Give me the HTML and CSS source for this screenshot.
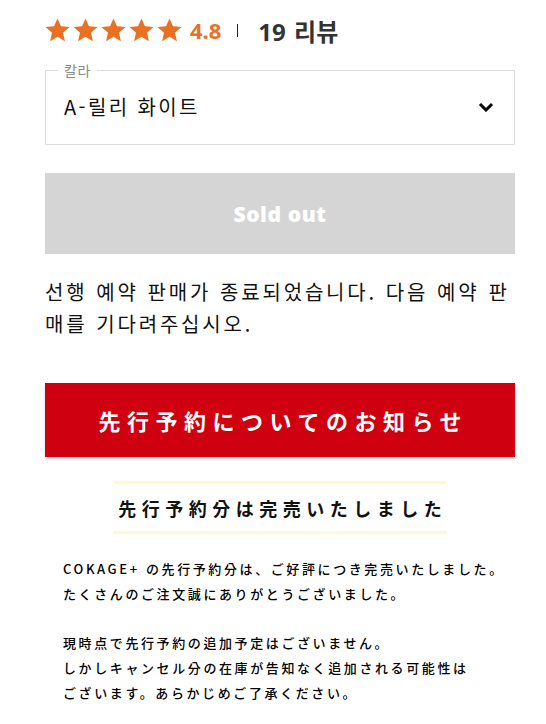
FILE: index.html
```html
<!DOCTYPE html>
<html lang="ko">
<head>
<meta charset="utf-8">
<link rel="stylesheet" href="styles.css">
</head>
<body>
<div class="page">
  <div class="rating">
    <div class="stars">
      <svg class="star" viewBox="0 0 24 24"><polygon points="12,0.5 15.3,7.9 23.5,8.7 17.3,14.1 19.1,22.2 12,18 4.9,22.2 6.7,14.1 0.5,8.7 8.7,7.9"/></svg>
      <svg class="star" viewBox="0 0 24 24"><polygon points="12,0.5 15.3,7.9 23.5,8.7 17.3,14.1 19.1,22.2 12,18 4.9,22.2 6.7,14.1 0.5,8.7 8.7,7.9"/></svg>
      <svg class="star" viewBox="0 0 24 24"><polygon points="12,0.5 15.3,7.9 23.5,8.7 17.3,14.1 19.1,22.2 12,18 4.9,22.2 6.7,14.1 0.5,8.7 8.7,7.9"/></svg>
      <svg class="star" viewBox="0 0 24 24"><polygon points="12,0.5 15.3,7.9 23.5,8.7 17.3,14.1 19.1,22.2 12,18 4.9,22.2 6.7,14.1 0.5,8.7 8.7,7.9"/></svg>
      <svg class="star" viewBox="0 0 24 24"><polygon points="12,0.5 15.3,7.9 23.5,8.7 17.3,14.1 19.1,22.2 12,18 4.9,22.2 6.7,14.1 0.5,8.7 8.7,7.9"/></svg>
    </div>
    <span class="score">4.8</span>
    <span class="sep"></span>
    <span class="reviews">19 리뷰</span>
  </div>

  <div class="select">
    <span class="select-label">칼라</span>
    <span class="select-value">A-릴리 화이트</span>
    <svg class="chevron" viewBox="0 0 16 10"><polyline points="2,2 8,8 14,2"/></svg>
  </div>

  <div class="soldout">Sold out</div>

  <p class="notice">선행 예약 판매가 종료되었습니다. 다음 예약 판매를 기다려주십시오.</p>

  <div class="banner">先行予約についてのお知らせ</div>

  <div class="subhead-wrap">
    <div class="subhead">先行予約分は完売いたしました</div>
  </div>

  <div class="body-text">
    <p>COKAGE+ の先行予約分は、ご好評につき完売いたしました。<br>たくさんのご注文誠にありがとうございました。</p>
    <p>現時点で先行予約の追加予定はございません。<br>しかしキャンセル分の在庫が告知なく追加される可能性は<br>ございます。あらかじめご了承ください。</p>
  </div>
</div>
</body>
</html>
```

FILE: styles.css
```css
html, body {
  margin: 0;
  padding: 0;
  background: #fff;
}
body {
  font-family: "Noto Sans CJK KR", "Noto Sans", sans-serif;
  color: #111;
}
.page {
  width: 470px;
  padding: 15px 0 0 45px;
}
.rating {
  display: flex;
  align-items: center;
  height: 30px;
}
.stars {
  display: flex;
  gap: 3px;
}
.star {
  width: 25px;
  height: 25px;
  fill: #ea7022;
}
.score {
  margin-left: 8px;
  font-family: "Noto Sans", sans-serif;
  font-weight: 700;
  font-size: 22px;
  color: #ea7022;
}
.sep {
  width: 1px;
  height: 13px;
  background: #222;
  margin: 0 20px 0 16px;
}
.reviews {
  font-family: "Noto Sans", "Noto Sans CJK KR", sans-serif;
  font-weight: 700;
  font-size: 24px;
  color: #333;
  word-spacing: 2px;
}
.select {
  position: relative;
  margin-top: 25px;
  height: 75px;
  border: 1px solid #dcdcdc;
  display: flex;
  align-items: flex-start;
  justify-content: space-between;
  padding: 21px 20px 0 18px;
  box-sizing: border-box;
}
.select-label {
  position: absolute;
  top: -10px;
  left: 12px;
  padding: 0 6px;
  background: #fff;
  font-size: 14px;
  line-height: 18px;
  color: #8a8a8a;
  letter-spacing: 0.5px;
}
.select-value {
  font-size: 20px;
  line-height: 30px;
  color: #111;
  letter-spacing: 2.4px;
}
.chevron {
  width: 16px;
  height: 10px;
  margin-top: 10px;
  fill: none;
  stroke: #000;
  stroke-width: 3;
}
.soldout {
  margin-top: 28px;
  height: 81px;
  background: #d5d5d5;
  color: #fff;
  display: flex;
  align-items: center;
  justify-content: center;
  font-family: "Open Sans", sans-serif;
  font-weight: 800;
  font-size: 21px;
  letter-spacing: 0.6px;
}
.notice {
  margin: 22px 0 0;
  font-size: 20px;
  line-height: 32px;
  color: #111;
  letter-spacing: 2.8px;
  word-spacing: 0.5px;
}
.banner {
  margin-top: 43px;
  height: 74px;
  background: #cf0010;
  color: #fff;
  display: flex;
  align-items: center;
  justify-content: center;
  font-family: "Noto Sans CJK JP", sans-serif;
  font-weight: 700;
  font-size: 22px;
  letter-spacing: 6.5px;
  padding-left: 6.5px;
  box-sizing: border-box;
  box-shadow: 0 2px 3px rgba(0,0,0,0.18);
}
.subhead-wrap {
  display: flex;
  justify-content: center;
  margin-top: 24px;
}
.subhead {
  width: 334px;
  border-top: 3px solid #fffacb;
  border-bottom: 3px solid #fffacb;
  height: 53px;
  display: flex;
  align-items: center;
  justify-content: center;
  white-space: nowrap;
  font-family: "Noto Sans CJK JP", sans-serif;
  font-weight: 700;
  font-size: 18px;
  letter-spacing: 5.5px;
  padding-left: 5.5px;
  box-sizing: border-box;
  color: #111;
}
.body-text {
  margin-top: 23px;
  padding-left: 18px;
  font-family: "Noto Sans CJK JP", sans-serif;
  font-weight: 500;
  font-size: 13px;
  line-height: 24.8px;
  letter-spacing: 2.6px;
  color: #000;
}
.body-text p {
  margin: 0 0 24.8px;
}
```
